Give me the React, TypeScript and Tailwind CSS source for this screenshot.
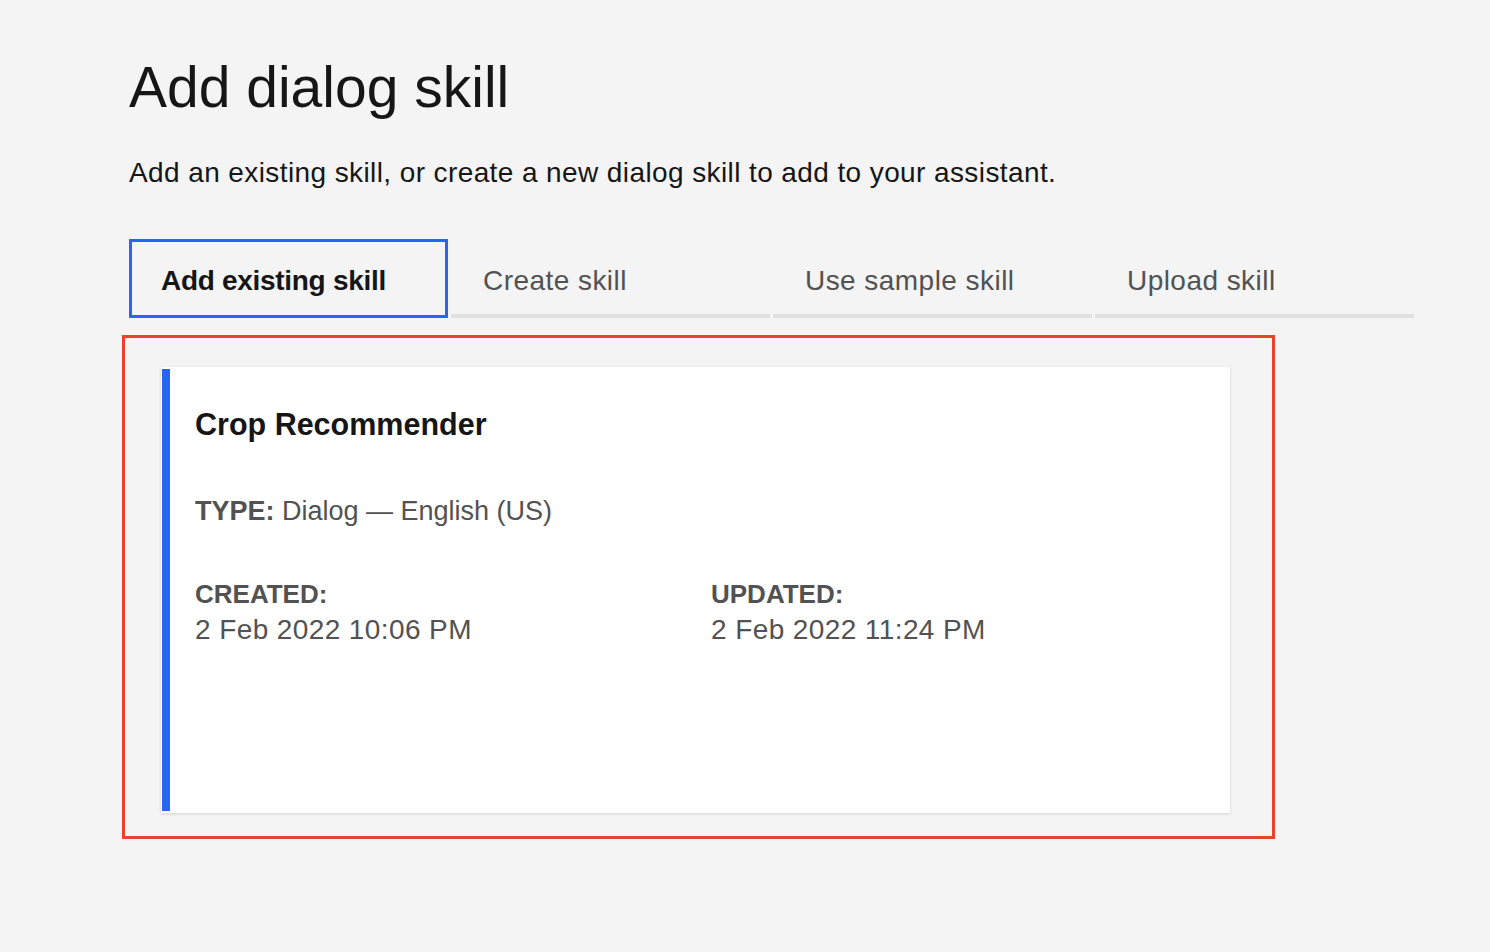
import React from "react";

const font = { fontFamily: '"Liberation Sans", Arial, sans-serif' };

export default function App() {
  const tabs = ["Create skill", "Use sample skill", "Upload skill"];
  return (
    <div
      className="min-h-screen bg-[#f4f4f4] pl-[129px] pt-[53px] text-[#161616]"
      style={font}
    >
      <h1 className="text-[57px] leading-[68px] font-normal">Add dialog skill</h1>
      <p className="mt-[34px] text-[28px] leading-[36px] tracking-[0.4px]">
        Add an existing skill, or create a new dialog skill to add to your assistant.
      </p>

      <div className="mt-[48px] flex gap-[3px]">
        <div className="h-[79px] w-[319px] border-[3px] border-[#2864f5] pl-[29px] pt-[25px] text-[28px] leading-[28px] font-bold tracking-[-0.3px] text-[#161616]">
          Add existing skill
        </div>
        {tabs.map((t) => (
          <div
            key={t}
            className="h-[79px] w-[319px] border-b-[4px] border-[#e0e0e0] pl-[32px] pt-[28px] text-[28px] leading-[28px] tracking-[0.45px] text-[#525252]"
          >
            {t}
          </div>
        ))}
      </div>

      <div className="-ml-[7px] mt-[17px] h-[504px] w-[1153px] border-[3px] border-[#ec412b] pl-[36px] pt-[29px]">
        <div className="flex h-[446px] w-[1069px] bg-white shadow-[0_1px_3px_rgba(0,0,0,0.14)]">
          <div className="my-[2px] ml-[1px] w-[8px] bg-[#2864f5]" />
          <div className="flex-1 pl-[25px] pt-[39px]">
            <div className="text-[30.5px] leading-[36px] font-bold text-[#161616]">
              Crop Recommender
            </div>
            <div className="mt-[52px] text-[27px] leading-[34px] text-[#525252]">
              <span className="font-bold">TYPE:</span> Dialog — English (US)
            </div>
            <div className="mt-[50px] grid grid-cols-[516px_1fr] text-[#525252]">
              <div>
                <div className="text-[26px] leading-[32px] font-bold">CREATED:</div>
                <div className="mt-[2px] text-[28px] leading-[36px] tracking-[0.4px]">
                  2 Feb 2022 10:06 PM
                </div>
              </div>
              <div>
                <div className="text-[26px] leading-[32px] font-bold">UPDATED:</div>
                <div className="mt-[2px] text-[28px] leading-[36px] tracking-[0.4px]">
                  2 Feb 2022 11:24 PM
                </div>
              </div>
            </div>
          </div>
        </div>
      </div>
    </div>
  );
}
